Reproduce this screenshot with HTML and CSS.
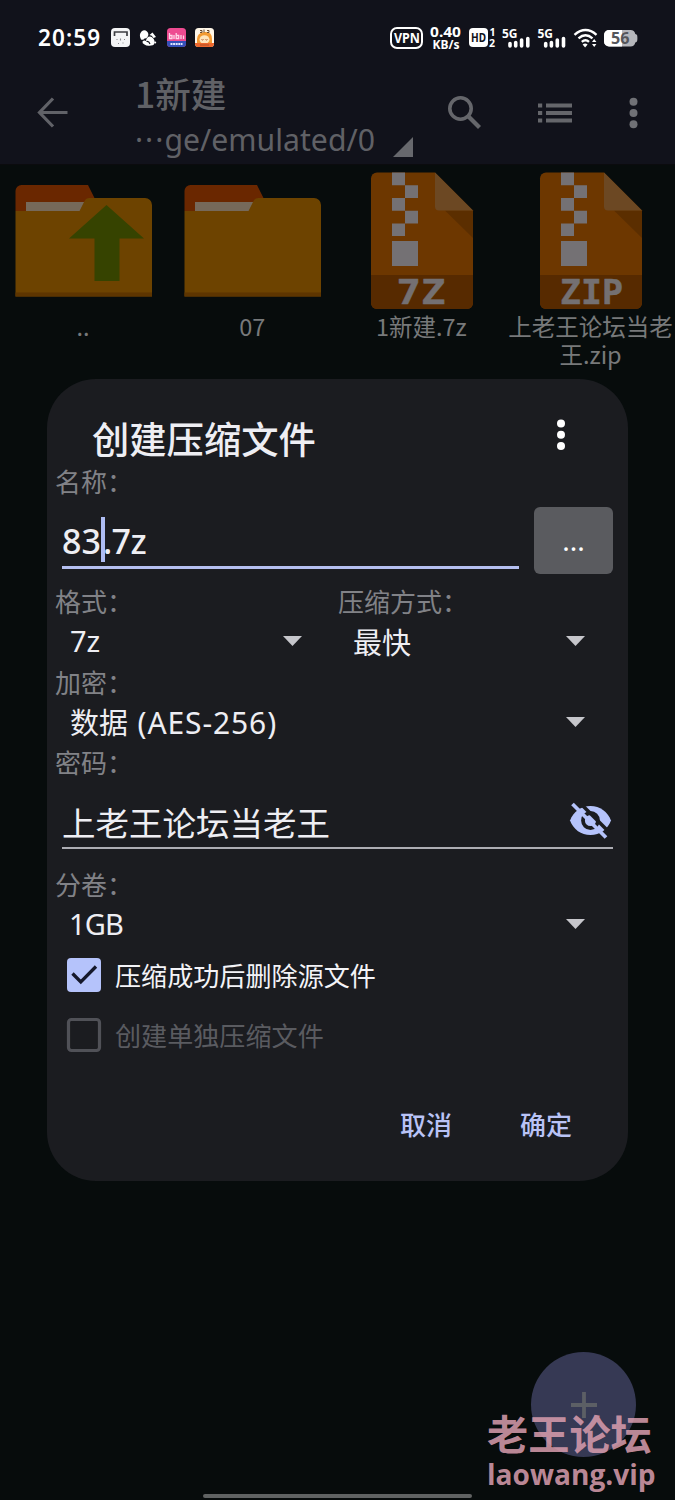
FILE: index.html
```html
<!DOCTYPE html>
<html lang="zh-CN">
<head>
<meta charset="utf-8">
<title>创建压缩文件</title>
<link rel="stylesheet" href="styles.css">
</head>
<body>
<div class="screen">
  <header class="top">
    <div class="status">
      <span class="clock">20:59</span>
      <svg class="notif" width="106" height="22" viewBox="0 0 106 22">
        <rect x="1" y="1" width="19" height="19" rx="4" fill="#f4f4f6"/>
        <path d="M4.500 9V5H17V9" fill="none" stroke="#3c3d42" stroke-width="1.700"/>
        <path d="M6.500 12.500h1M10.500 11.500v2M14 12.500h1M8 16.500h1M12.500 16h1" stroke="#85868c" stroke-width="1.100"/>
        <path d="M31 12.500q-2.500-5 .5-8 3-2.500 5.500 0 2.500 2.500.5 5.500-1 1.500-3 1.500-1 2-3.500 1z" fill="#fff"/>
        <path d="M39.500 8l3-2.500L46 10l-2.500 1q-1.500-3-4-3z" fill="#fff"/>
        <path d="M34.500 17.500q-2.500-1-2-3 1.500-1.500 3.500-.5.500-4.500 4-4.500 3.500.5 4.500 4.500.5 4.500-3.500 4.500-4 1-6.500-1z" fill="#fff"/>
        <path d="M36.500 14.500q2.500-.5 3.500 2.500" fill="none" stroke="#11121b" stroke-width="1.100"/>
        <circle cx="45.200" cy="15.500" r="1" fill="#fff"/>
        <rect x="57" y="1" width="19" height="19" rx="3.500" fill="#ee4b91"/>
        <path d="M57 14h19v2.500a3.500 3.500 0 0 1-3.500 3.500h-12a3.500 3.500 0 0 1-3.500-3.500z" fill="#3450b8"/>
        <path d="M59.500 6v5.500h2.500V8.500h-2.500M64 8v4M66.200 6v5.500h2.500V8.500h-2.500M71 8v4M73.500 8.500v3.500" fill="none" stroke="#ffd4e7" stroke-width="1.300"/>
        <path d="M60.500 17h12" stroke="#dfe5ff" stroke-width="2" stroke-dasharray="2 .6"/>
        <rect x="85" y="1" width="19" height="19" rx="3.500" fill="#fff6e8"/>
        <path d="M87 20V12q0-6 7.500-7t7.500 7v8z" fill="#f39a32"/>
        <ellipse cx="94.500" cy="12.500" rx="5" ry="4.300" fill="#ffe5bd"/>
        <path d="M85 16h19v.5a3.500 3.500 0 0 1-3.500 3.500h-12a3.500 3.500 0 0 1-3.500-3.500z" fill="#ee662c"/>
        <path d="M90 3.500h2v2h-2M94 2.500v3M97 3.500h2v2h-2" fill="none" stroke="#6b4a2c"/>
        <path d="M91.500 12.500q1 1 2 0M95.500 12.500q1 1 2 0M90 18h9" fill="none" stroke="#a54c24" stroke-width=".9"/>
      </svg>
      <svg class="signals" width="250" height="28" viewBox="0 0 250 28">
        <rect x="2" y="4" width="31" height="20" rx="6" fill="none" stroke="#fff" stroke-width="2"/>
        <text x="5" y="19" class="s-vpn" textLength="26" lengthAdjust="spacingAndGlyphs">VPN</text>
        <text x="41" y="13" class="s-rate" textLength="31" lengthAdjust="spacingAndGlyphs">0.40</text>
        <text x="43.500" y="24.500" class="s-unit" textLength="27" lengthAdjust="spacingAndGlyphs">KB/s</text>
        <rect x="80" y="4" width="19" height="19" rx="4" fill="#fff"/>
        <text x="82" y="18" class="s-hd" textLength="15" lengthAdjust="spacingAndGlyphs">HD</text>
        <text x="100.500" y="12" class="s-num">1</text>
        <text x="100" y="22.500" class="s-num">2</text>
        <text x="113" y="14" class="s-5g" textLength="15.500" lengthAdjust="spacingAndGlyphs">5G</text>
        <path d="M121 22v-2.500M126.700 22v-3.500M132.600 22v-6M138.800 22v-7.500" class="bars"/>
        <text x="148.500" y="14" class="s-5g" textLength="15.500" lengthAdjust="spacingAndGlyphs">5G</text>
        <path d="M156.700 22v-2.500M162.400 22v-3.500M168.300 22v-6M174.500 22v-7.500" class="bars"/>
        <g transform="translate(1)">
          <path d="M184.500 10.800q11-9.500 22 0M188.500 14.300q7-6.200 14 0M191.800 17.800q3.700-3.300 7.200 0" fill="none" stroke="#fff" stroke-width="2.400"/>
          <path d="M192.600 20.500q2.500-1.800 5 0l-2.500 3z" fill="#fff"/>
          <path d="M202 18l2.200-3 2.200 3zM202 20h4.400l-2.200 3z" fill="#fff"/>
          <path d="M219 6h21.500a5 5 0 0 1 4.800 4c2.100.3 2.100 1.800 2.100 4s0 4.200-2.100 4.500a5 5 0 0 1-4.800 4H219a5 5 0 0 1-5-5v-6.500a5 5 0 0 1 5-5z" fill="#b5b6bb"/>
          <path d="M219 6h13v16.500h-13a5 5 0 0 1-5-5V11a5 5 0 0 1 5-5z" fill="#fff"/>
          <text x="221" y="20" class="s-bat" textLength="18.500" lengthAdjust="spacingAndGlyphs">56</text>
        </g>
      </svg>
    </div>
    <div class="appbar">
      <svg class="back" width="32" height="32" viewBox="0 0 32 32"><path d="M17 1.500L3.500 15.500 17 29.500M3.500 15.500h28" fill="none" stroke="#616268" stroke-width="3.200"/></svg>
      <div class="heading">
        <div class="folder-name">1新建</div>
        <div class="path"><span>···</span>ge/emulated/0<svg width="20" height="20" viewBox="0 0 20 20"><path d="M20 0v20H0z" fill="#67686d"/></svg></div>
      </div>
      <svg class="tools" width="200" height="36" viewBox="0 0 200 36" fill="none" stroke="#65666b">
        <circle cx="14.500" cy="13.500" r="10.700" stroke-width="3.600"/><path d="M22.500 21.500l11 11" stroke-width="4.300"/>
        <path d="M92 10.500h4.200M92 18h4.200M92 25.500h4.200M100 10.500h26M100 18h26M100 25.500h26" stroke-width="4.200"/>
        <g fill="#707176" stroke="none"><circle cx="187.500" cy="6.800" r="4"/><circle cx="187.500" cy="18" r="4"/><circle cx="187.500" cy="29.200" r="4"/></g>
      </svg>
    </div>
  </header>

  <main class="files">
    <div class="file">
      <svg width="137" height="137" viewBox="0 0 137 137">
        <path d="M.5 39V19a6 6 0 0 1 6-6H73l7 14v12z" fill="#6a2700"/>
        <path d="M11 30h58v9H11z" fill="#76695a"/>
        <path d="M.5 39h64l5-10q1.500-3 5-3H130a7 7 0 0 1 7 7v91.500H.5z" fill="#6d4300"/>
        <path d="M.5 120.500H137v4H.5z" fill="#5d3500"/>
        <path d="M91.500 33L129 66.500h-24.500V109h-25V66.500H54z" fill="#364300"/>
      </svg>
      <p>..</p>
    </div>
    <div class="file">
      <svg width="137" height="137" viewBox="0 0 137 137">
        <path d="M.5 39V19a6 6 0 0 1 6-6H73l7 14v12z" fill="#6a2700"/>
        <path d="M11 30h58v9H11z" fill="#76695a"/>
        <path d="M.5 39h64l5-10q1.500-3 5-3H130a7 7 0 0 1 7 7v91.500H.5z" fill="#6d4300"/>
        <path d="M.5 120.500H137v4H.5z" fill="#5d3500"/>
      </svg>
      <p>07</p>
    </div>
    <div class="file">
      <svg width="137" height="137" viewBox="0 0 137 137">
        <path d="M24 .5h58l38 38V131a6 6 0 0 1-6 6H24a6 6 0 0 1-6-6V6.500a6 6 0 0 1 6-6z" fill="#6d3700"/>
        <path d="M18 103h102v28a6 6 0 0 1-6 6H24a6 6 0 0 1-6-6z" fill="#572a00"/>
        <path d="M92 38.500h28V66z" fill="#5b2e00"/>
        <path d="M82 .5l38 38H86a4 4 0 0 1-4-4z" fill="#6c4823"/>
        <path d="M39 .5h13v12.700H39zM52 13.200h13v12.700H52zM39 25.900h13v12.800H39zM52 38.700h13v12.800H52zM39 51.500h13v12.500H39zM39 69h26v25H39z" fill="#747174"/>
        <text x="43.500" y="132" class="ext" textLength="49" lengthAdjust="spacingAndGlyphs">7Z</text>
      </svg>
      <p>1新建.7z</p>
    </div>
    <div class="file">
      <svg width="137" height="137" viewBox="0 0 137 137">
        <path d="M24 .5h58l38 38V131a6 6 0 0 1-6 6H24a6 6 0 0 1-6-6V6.500a6 6 0 0 1 6-6z" fill="#6d3700"/>
        <path d="M18 103h102v28a6 6 0 0 1-6 6H24a6 6 0 0 1-6-6z" fill="#572a00"/>
        <path d="M92 38.500h28V66z" fill="#5b2e00"/>
        <path d="M82 .5l38 38H86a4 4 0 0 1-4-4z" fill="#6c4823"/>
        <path d="M39 .5h13v12.700H39zM52 13.200h13v12.700H52zM39 25.900h13v12.800H39zM52 38.700h13v12.800H52zM39 51.500h13v12.500H39zM39 69h26v25H39z" fill="#747174"/>
        <text x="38" y="132" class="ext" textLength="63" lengthAdjust="spacingAndGlyphs">ZIP</text>
      </svg>
      <p>上老王论坛当老<br>王.zip</p>
    </div>
  </main>

  <section class="dialog">
    <div class="dialog-head">
      <h1>创建压缩文件</h1>
      <svg width="10" height="34" viewBox="0 0 10 34" fill="#fff"><circle cx="5" cy="5.500" r="4"/><circle cx="5" cy="16.800" r="4"/><circle cx="5" cy="28" r="4"/></svg>
    </div>
    <div class="label">名称：</div>
    <div class="name-row">
      <div class="field name"><span class="n1">83</span><i class="caret"></i><span class="n2">.7z</span></div>
      <button class="more">...</button>
    </div>
    <div class="pair">
      <div>
        <div class="label">格式：</div>
        <div class="select"><span class="latin">7z</span><i class="arrow"></i></div>
      </div>
      <div>
        <div class="label">压缩方式：</div>
        <div class="select"><span>最快</span><i class="arrow"></i></div>
      </div>
    </div>
    <div class="label">加密：</div>
    <div class="select"><span>数据 <b>(AES-256)</b></span><i class="arrow"></i></div>
    <div class="label">密码：</div>
    <div class="field password"><span>上老王论坛当老王</span>
      <svg width="44" height="38" viewBox="0 0 44 38">
        <path d="M1 18.500C4.500 9.500 12 4 21.500 4S38.500 9.500 42 18.500C38.500 27.500 31 33 21.500 33S4.500 27.500 1 18.500z" fill="#b5c3fb"/>
        <circle cx="21.500" cy="18.500" r="7.500" fill="none" stroke="#1b1c20" stroke-width="3.800"/>
        <path d="M8.500-1.500L41.500 31.500" stroke="#1b1c20" stroke-width="3.600"/>
        <path d="M3.500 2L37 35.500" stroke="#b5c3fb" stroke-width="3.800"/>
      </svg>
    </div>
    <div class="label">分卷：</div>
    <div class="select"><span class="latin gb">1GB</span><i class="arrow"></i></div>
    <div class="check first">
      <svg width="34" height="34" viewBox="0 0 34 34"><rect width="34" height="34" rx="4" fill="#b5c3fb"/><path d="M5.500 15.500l8.300 8.500L29 8.500" fill="none" stroke="#15182b" stroke-width="3.300"/></svg>
      <span>压缩成功后删除源文件</span>
    </div>
    <div class="check disabled">
      <svg width="34" height="34" viewBox="0 0 34 34"><rect x="1.500" y="1.500" width="31" height="31" rx="3" fill="none" stroke="#505157" stroke-width="3.200"/></svg>
      <span>创建单独压缩文件</span>
    </div>
    <div class="actions"><span>取消</span><span>确定</span></div>
  </section>

  <div class="fab"><svg width="28" height="28" viewBox="0 0 28 28"><path d="M14 1v26M1 14h26" stroke="#5c5f65" stroke-width="3.800"/></svg></div>
  <div class="watermark"><div class="wm-cn">老王论坛</div><div class="wm-url">laowang.vip</div></div>
  <div class="home-bar"></div>
</div>
</body>
</html>
```
FILE: styles.css
```css
* { box-sizing: border-box; }
body { margin: 0; background: #070c0c; }
.screen {
  position: relative;
  width: 675px;
  height: 1500px;
  overflow: hidden;
  background: #070c0c;
  font-family: "Noto Sans CJK SC", sans-serif;
}
.screen svg { display: block; flex: none; overflow: visible; }

.top { height: 165px; background: #11121b; border-bottom: 1px solid #0b0b0e; }
.status { display: flex; height: 60px; padding: 26px 0 0 38px; align-items: flex-start; }
.clock {
  width: 72px;
  color: #fff;
  font: 600 22.5px/24px "Noto Sans", sans-serif;
  letter-spacing: 1.1px;
}
.signals { margin: -2px 0 0 173px; }
.signals text { font-family: "Noto Sans", sans-serif; fill: #fff; font-weight: 700; }
.notif { margin-top: 1px; }
.signals .s-vpn { font-size: 14px; }
.signals .s-rate { font-size: 13.5px; }
.signals .s-unit { font-size: 11.5px; }
.signals .s-hd { font-size: 12.5px; fill: #11121b; }
.signals .s-num { font-size: 10.5px; }
.signals .s-5g { font-size: 12.5px; }
.signals .s-bat { font-size: 16px; fill: #55565b; }
.bars { stroke: #fff; stroke-width: 3.6; stroke-linecap: round; }

.appbar { display: flex; height: 104px; color: #606166; }
.back { margin: 37px 0 0 36px; }
.heading { width: 311px; padding: 10px 0 0 67px; }
.folder-name { font-size: 35.6px; line-height: 46px; height: 49px; font-weight: 500; white-space: nowrap; }
.path {
  display: flex;
  font: 30.2px/42px "Noto Sans", sans-serif;
  white-space: nowrap;
}
.path span { width: 29.5px; letter-spacing: 2px; }
.path svg { margin: 18px 0 0 18px; }
.tools { margin: 35px 0 0 67px; }

.files { display: grid; grid-template-columns: repeat(4, 169.2px); margin-left: -1.6px; padding-top: 7px; }
.file { display: flex; flex-direction: column; align-items: center; }
.file p {
  margin: 3px 0 0;
  color: #77797a;
  font-size: 23.5px;
  line-height: 28px;
  text-align: center;
  white-space: nowrap;
}
.ext { font: 700 33px "DejaVu Sans Mono", monospace; fill: #747072; stroke: #747072; stroke-width: .5px; }

.dialog {
  position: absolute;
  left: 47px;
  top: 379px;
  width: 581px;
  height: 802px;
  border-radius: 49px;
  background: #1b1c20;
  color: #eeeef3;
}
.dialog-head { display: flex; justify-content: space-between; height: 87px; padding: 33px 62px 0 45px; }
.dialog-head h1 { margin: -1px 0 0; font-size: 37.3px; line-height: 54px; font-weight: 500; }
.dialog-head svg { margin-top: 6px; }
.label { height: 30px; padding-left: 8px; color: #818287; font-size: 26px; line-height: 30px; white-space: nowrap; }
.name-row { display: flex; height: 90px; padding: 11px 15px 0; justify-content: space-between; align-items: flex-start; }
.field { display: flex; align-items: center; font-size: 33.5px; }
.name {
  width: 457px;
  height: 62px;
  padding-top: 5px;
  border-bottom: 3.5px solid #b5bff0;
  font-family: "Noto Sans", sans-serif;
  font-size: 34px;
}
.name span { margin-top: 4px; font-weight: 500; line-height: 46px; }
.n2 { letter-spacing: -.6px; }
.caret { width: 4px; height: 45px; margin: 0 -2px 0 0; background: #aebcf3; }
.more {
  width: 79px;
  height: 67px;
  padding: 0;
  border: 0;
  border-radius: 6px;
  background: #5a5b5f;
  color: #fff;
  font: 28px/67px "Noto Sans", sans-serif;
}
.pair { display: grid; grid-template-columns: 283px 298px; height: 81px; }
.select {
  display: flex;
  height: 50px;
  padding: 0 43px 0 23px;
  align-items: center;
  justify-content: space-between;
  font-size: 29px;
  line-height: 50px;
  white-space: nowrap;
}
.pair > :first-child .select { padding-right: 28px; }
.select b, .latin { font-family: "Noto Sans", sans-serif; font-weight: 400; }
.select b { margin-left: 3px; font-size: 30px; letter-spacing: .9px; }
.gb { margin-left: -1px; letter-spacing: -.9px; }
.arrow { width: 19px; height: 10px; background: #c6c6cb; clip-path: polygon(0 0, 100% 0, 50% 100%); }
.password {
  justify-content: space-between;
  width: 551px;
  height: 72px;
  margin: 0 0 20px 15px;
  padding-top: 22px;
  border-bottom: 2px solid #adadb3;
}
.password span { margin-top: -3px; }
.password svg { margin-top: -4px; }
.check { display: flex; height: 52px; padding-left: 20px; align-items: center; gap: 14px; font-size: 26.1px; color: #f3f3f7; }
.disabled { height: 68px; color: #5a5b60; }
.actions { display: flex; height: 108px; padding: 0 56px 0 0; align-items: center; justify-content: flex-end; gap: 68px; color: #b9c3f6; font-size: 26px; font-weight: 500; }

.fab {
  position: absolute;
  left: 531px;
  top: 1352px;
  display: grid;
  place-items: center;
  width: 105px;
  height: 105px;
  border-radius: 50%;
  background: #363954;
}
.watermark { position: absolute; left: 487px; top: 1406px; color: rgba(219, 158, 175, .86); white-space: nowrap; }
.wm-cn { font-size: 41.2px; line-height: 52px; font-weight: 700; }
.wm-url { margin-top: 1px; font: 700 28.1px/30px "Open Sans", sans-serif; }
.home-bar { position: absolute; left: 203px; top: 1494px; width: 269px; height: 4px; border-radius: 2px; background: #606363; }
```
